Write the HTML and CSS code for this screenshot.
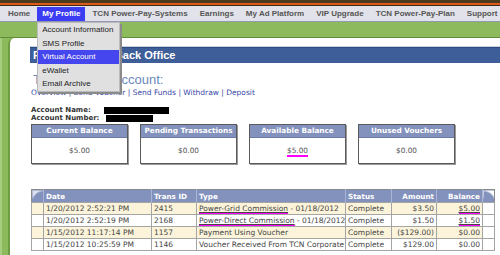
FILE: index.html
```html
<!DOCTYPE html>
<html lang="en">
<head>
  <meta charset="UTF-8" />
  <title>TCN Virtual Account</title>
  <link rel="stylesheet" href="styles.css">
</head>
<body>
  <div class="topbar"></div>

  <ul class="nav">
    <li>Home</li>
    <li class="active">My Profile
      <ul class="dropdown">
        <li>Account Information</li>
        <li>SMS Profile</li>
        <li class="hl">Virtual Account</li>
        <li>eWallet</li>
        <li>Email Archive</li>
      </ul>
    </li>
    <li>TCN Power-Pay-Systems</li>
    <li>Earnings</li>
    <li>My Ad Platform</li>
    <li>VIP Upgrade</li>
    <li>TCN Power-Pay-Plan</li>
    <li>Support</li>
  </ul>

  <div class="band"></div>

  <div class="frame">
    <div class="panel">
      <div class="titlebar">Representative Back Office</div>
      <h1>TCN Virtual Account:</h1>
      <p class="links">
        <a href="#">Overview</a> | <a href="#">Send Voucher</a> | <a href="#">Send Funds</a> | <a href="#">Withdraw</a> | <a href="#">Deposit</a>
      </p>

      <div class="acct">
        <div class="acct-row"><span class="acct-label">Account Name:</span><span class="redact name"></span></div>
        <div class="acct-row"><span class="acct-label">Account Number:</span><span class="redact number"></span></div>
      </div>

      <div class="boxes">
        <div class="box">
          <div class="box-head">Current Balance</div>
          <div class="box-body">$5.00</div>
        </div>
        <div class="box">
          <div class="box-head">Pending Transactions</div>
          <div class="box-body">$0.00</div>
        </div>
        <div class="box">
          <div class="box-head">Available Balance</div>
          <div class="box-body"><span class="mark">$5.00</span></div>
        </div>
        <div class="box">
          <div class="box-head">Unused Vouchers</div>
          <div class="box-body">$0.00</div>
        </div>
      </div>

      <table class="trans">
        <colgroup>
          <col class="c-edge"><col class="c-date"><col class="c-id"><col class="c-type">
          <col class="c-status"><col class="c-amt"><col class="c-bal"><col class="c-edge">
        </colgroup>
        <thead>
          <tr>
            <th class="corner-l"></th>
            <th>Date</th>
            <th>Trans ID</th>
            <th>Type</th>
            <th>Status</th>
            <th class="num">Amount</th>
            <th class="num">Balance</th>
            <th class="corner-r"></th>
          </tr>
        </thead>
        <tbody>
          <tr class="alt">
            <td></td>
            <td>1/20/2012 2:52:21 PM</td>
            <td>2415</td>
            <td><span class="mark link">Power-Grid Commission</span> - 01/18/2012</td>
            <td>Complete</td>
            <td class="num">$3.50</td>
            <td class="num"><span class="mark link">$5.00</span></td>
            <td class="end"></td>
          </tr>
          <tr>
            <td></td>
            <td>1/20/2012 2:52:19 PM</td>
            <td>2168</td>
            <td><span class="mark link">Power-Direct Commission</span> - 01/18/2012</td>
            <td>Complete</td>
            <td class="num">$1.50</td>
            <td class="num"><span class="mark link">$1.50</span></td>
            <td class="end"></td>
          </tr>
          <tr class="alt">
            <td></td>
            <td>1/15/2012 11:17:14 PM</td>
            <td>1157</td>
            <td>Payment Using Voucher</td>
            <td>Complete</td>
            <td class="num">($129.00)</td>
            <td class="num">$0.00</td>
            <td class="end"></td>
          </tr>
          <tr>
            <td></td>
            <td>1/15/2012 10:25:59 PM</td>
            <td>1146</td>
            <td>Voucher Received From TCN Corporate</td>
            <td>Complete</td>
            <td class="num">$129.00</td>
            <td class="num">$0.00</td>
            <td class="end"></td>
          </tr>
        </tbody>
      </table>
    </div>
  </div>
</body>
</html>
```

FILE: styles.css
```css
body {
  margin: 0;
  font-family: "DejaVu Sans", Verdana, sans-serif;
  background: #fff;
  color: #444;
  overflow: hidden;
}

.topbar {
  height: 6px;
  background: linear-gradient(#4b3b1c 0 3px, #de5a1c 3px 5px, #3b2b14 5px);
}

.nav {
  display: flex;
  margin: 0;
  padding: 1px 0 0 2px;
  list-style: none;
  height: 14px;
  background: #e2e2ea;
  border-bottom: 1px solid #9098b4;
  font: bold 8px/14px "Liberation Sans", Arial, sans-serif;
  color: #555;
}

.nav > li {
  position: relative;
  padding: 0 6px;
  white-space: nowrap;
}

.nav > li.active {
  background: #3c3cf2;
  color: #fff;
  padding: 0 5px;
  margin: 0 1px;
}

.dropdown {
  position: absolute;
  top: 100%;
  left: 0;
  z-index: 5;
  width: 81px;
  margin: 1px 0 0;
  padding: 0;
  list-style: none;
  background: #e0e0e0;
  border: 1px solid #bbb;
  box-shadow: 2px 2px 0 #8a8a8a;
  font: 8px/13.5px "Liberation Sans", Arial, sans-serif;
  color: #222;
}

.dropdown li {
  padding: 0 4px;
}

.dropdown li.hl {
  background: #4646ee;
  color: #fff;
}

.band {
  height: 15px;
  background: #8dba5d;
  border-bottom: 1px solid #5f8d36;
}

.frame {
  background: linear-gradient(to right, #a7cd7e 2px, #8dba5d 2px);
  padding-left: 8px;
}

.panel {
  background: #fff;
  border-left: 2px solid #6e9c43;
  border-top-left-radius: 6px;
  padding: 8px 0 6px 20px;
}

.titlebar {
  height: 16px;
  border-top: 1px solid #c9d2de;
  background: #3d5e99;
  box-shadow: inset 0 1px 0 #2f4c80;
  color: #fff;
  font: bold 11px/16px "Liberation Sans", Arial, sans-serif;
  padding-left: 3px;
}

h1 {
  margin: 9px 0 0 3px;
  font: 13px/15px "Liberation Sans", Arial, sans-serif;
  color: #6a88bb;
  word-spacing: 5px;
}

.links {
  margin: 1px 0 0 1px;
  font-size: 7.5px;
  line-height: 10px;
  color: #3848a8;
}

.links a {
  color: #3848a8;
  text-decoration: none;
}

.acct {
  margin: 8px 0 0 1px;
  font-weight: bold;
  font-size: 7px;
  line-height: 8px;
  color: #333;
}

.acct-row {
  display: flex;
  align-items: center;
}

.acct-label {
  width: 73px;
}

.redact {
  display: inline-block;
  height: 7px;
  background: #000;
}

.redact.name {
  width: 65px;
}

.redact.number {
  width: 47px;
  margin-left: 2px;
}

.boxes {
  display: flex;
  gap: 12px;
  margin: 2px 0 0 1px;
}

.box {
  width: 95px;
  border: 1px solid #5a5a5a;
  box-shadow: 1px 1px 0 #9a9a9a;
}

.box-head {
  background: #8391bd;
  color: #fff;
  font-weight: bold;
  font-size: 7.3px;
  line-height: 12px;
  text-align: center;
  border-bottom: 1px solid #6c79a3;
  white-space: nowrap;
}

.box-body {
  height: 25px;
  line-height: 25px;
  text-align: center;
  font-size: 7.3px;
  color: #555;
}

.mark {
  border-bottom: 2px solid #f0f;
}

.link {
  text-decoration: underline;
}

.trans {
  margin: 25px 0 0 1px;
  width: 463px;
  border-collapse: collapse;
  table-layout: fixed;
  font-size: 7.5px;
  color: #444;
  border: 1px solid #8a8a8a;
}

.c-edge { width: 12px; }
.c-date { width: 108px; }
.c-id { width: 45px; }
.c-type { width: 149px; }
.c-status { width: 46px; }
.c-amt { width: 45px; }
.c-bal { width: 46px; }

.trans th {
  height: 12px;
  padding: 0 2px;
  background: #8391bd;
  color: #fff;
  font-weight: bold;
  font-size: 7.2px;
  text-align: left;
  border-left: 1px solid #aab4d4;
}

.trans th.corner-l {
  border-left: none;
  background: radial-gradient(circle at 100% 100%, #8391bd 11px, #dfe3ef 12px);
}

.trans th.corner-r {
  background: radial-gradient(circle at 0 100%, #8391bd 11px, #fff 12px);
}

.trans td {
  height: 11px;
  line-height: 11px;
  padding: 0 2px;
  border: 1px solid #a4a4a4;
  white-space: nowrap;
  overflow: hidden;
}

.trans tr.alt td {
  background: #fcf4da;
}

.trans tr.alt td.end {
  background: #fff;
}

.trans .num {
  text-align: right;
}
```
